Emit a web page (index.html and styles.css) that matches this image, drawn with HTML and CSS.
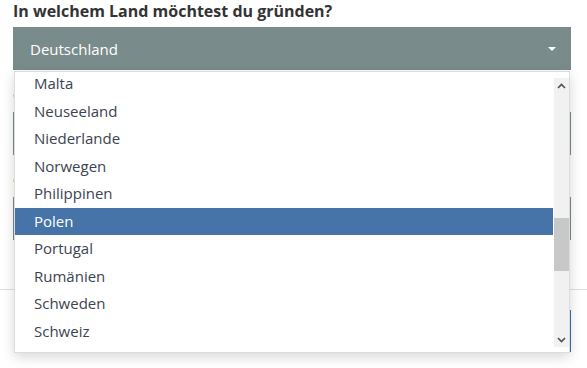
FILE: index.html
```html
<!DOCTYPE html>
<html lang="de">
    <head>
        <meta charset="UTF-8">
        <meta name="viewport" content="width=device-width, initial-scale=1.0">
        <title>Gründung</title>
        <link rel="stylesheet" href="styles.css">
    </head>
    <body>
        <div class="page">
            <div class="form-body">
                <h2 class="question">In welchem Land möchtest du gründen?</h2>
                <div class="select">
                    <span>Deutschland</span>
                    <span class="caret"></span>
                </div>
                <label class="field-label">anzahl der Gründer</label>
                <div class="select">
                    <span>1</span>
                    <span class="caret"></span>
                </div>
                <label class="field-label">art der Gesellschaft</label>
                <div class="select">
                    <span>GmbH</span>
                    <span class="caret"></span>
                </div>
            </div>
            <hr class="divider">
            <div class="actions">
                <button class="btn">Weiter</button>
            </div>

            <div class="dropdown">
                <ul class="options">
                    <li>Malta</li>
                    <li>Neuseeland</li>
                    <li>Niederlande</li>
                    <li>Norwegen</li>
                    <li>Philippinen</li>
                    <li class="active">Polen</li>
                    <li>Portugal</li>
                    <li>Rumänien</li>
                    <li>Schweden</li>
                    <li>Schweiz</li>
                </ul>
                <div class="scrollbar">
                    <div class="arrow">
                        <svg width="9" height="6" viewBox="0 0 9 6"><polyline points="1,5 4.5,1.5 8,5" fill="none" stroke="#505050" stroke-width="1.6"/></svg>
                    </div>
                    <div class="track">
                        <div class="thumb"></div>
                    </div>
                    <div class="arrow">
                        <svg width="9" height="6" viewBox="0 0 9 6"><polyline points="1,1 4.5,4.5 8,1" fill="none" stroke="#505050" stroke-width="1.6"/></svg>
                    </div>
                </div>
            </div>
        </div>
    </body>
</html>
```

FILE: styles.css
```css
*{
    margin: 0;
    padding: 0;
    box-sizing: border-box;
}
body{
    background: #fff;
    font-family: "Open Sans", "Noto Sans", sans-serif;
    color: #333;
}
.page{
    position: relative;
    width: 587px;
    height: 368px;
    overflow: hidden;
}
.form-body{
    padding: 0 16px 0 13px;
}
.question{
    font-size: 16px;
    font-weight: 700;
    line-height: 22px;
    color: #333;
    margin-bottom: 5px;
}
.select{
    display: flex;
    align-items: center;
    justify-content: space-between;
    height: 43px;
    padding: 0 15px 0 17px;
    background: #798b8a;
    color: #fff;
    font-size: 15px;
}
.caret{
    width: 0;
    height: 0;
    border-left: 4px solid transparent;
    border-right: 4px solid transparent;
    border-top: 4px solid #fff;
}
.field-label{
    display: block;
    margin-top: 12px;
    margin-bottom: 9px;
    line-height: 21px;
    font-size: 15px;
    font-weight: 600;
    color: #b5843f;
}
.divider{
    border: 0;
    border-top: 1px solid #dedede;
    margin-top: 49px;
}
.actions{
    display: flex;
    justify-content: flex-end;
    padding: 20px 16px 0 13px;
}
.btn{
    height: 42px;
    padding: 0 30px;
    border: 1px solid #3b6db3;
    background: #fff;
    color: #3b6db3;
    font-family: inherit;
    font-size: 15px;
}

/* open select popup */
.dropdown{
    position: absolute;
    top: 71px;
    left: 14px;
    width: 556px;
    height: 282px;
    display: flex;
    background: #fff;
    border: 1px solid #dcdcdc;
    box-shadow: 0 4px 12px rgba(0, 0, 0, 0.16);
}
.options{
    flex: 1;
    list-style: none;
    overflow: hidden;
    margin-right: 1px;
}
.options li{
    height: 27.5px;
    line-height: 27.5px;
    padding-left: 19px;
    font-size: 15px;
    color: #3b4450;
    white-space: nowrap;
}
.options li:first-child{
    margin-top: -1.75px;
}
.options li.active{
    background: #4673a8;
    color: #fff;
}
.scrollbar{
    display: flex;
    flex-direction: column;
    width: 15px;
    padding: 6px 0 5px;
}
.arrow{
    display: flex;
    align-items: center;
    justify-content: center;
    height: 15px;
    background: #f1f1f1;
}
.track{
    flex: 1;
    background: #f1f1f1;
}
.thumb{
    height: 53px;
    margin-top: 125px;
    background: #c8c8c8;
}
```
